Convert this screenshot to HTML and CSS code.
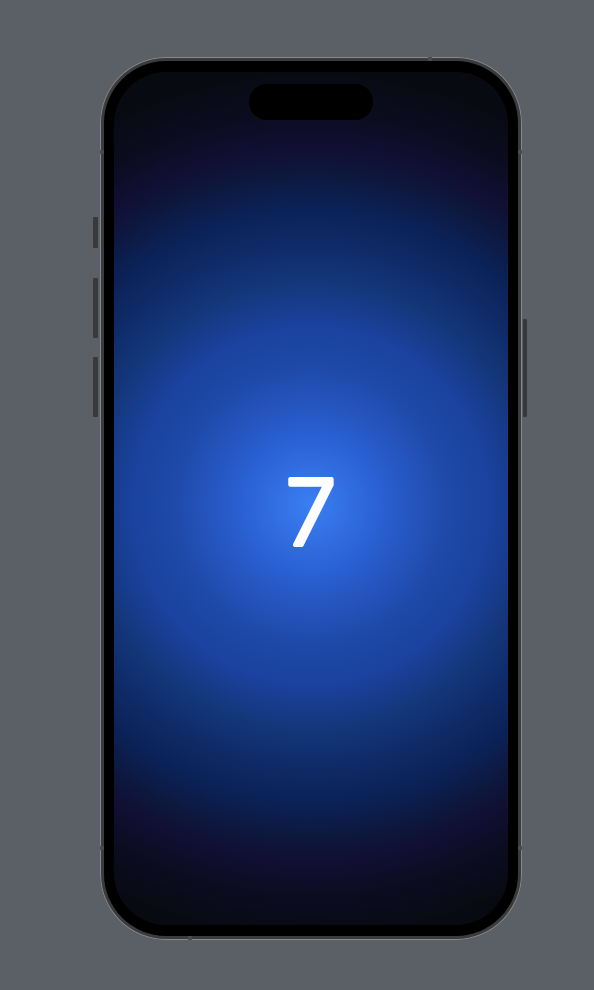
FILE: index.html
```html
<!DOCTYPE html>
<html lang="en">
<head>
<meta charset="utf-8">
<title>Phone</title>
<link rel="stylesheet" href="styles.css">
</head>
<body>
<div class="stage">
  <div class="phone">
    <span class="btn btn-action"></span>
    <span class="btn btn-volup"></span>
    <span class="btn btn-voldown"></span>
    <span class="btn btn-power"></span>
    <span class="band band-tl"></span>
    <span class="band band-tr"></span>
    <span class="band band-bl"></span>
    <span class="band band-br"></span>
    <span class="band band-top"></span>
    <span class="band band-bottom"></span>
    <div class="bezel">
      <div class="screen">
        <div class="island"></div>
        <svg class="digit" width="120" height="120" viewBox="0 0 120 120">
          <text x="60" y="92" text-anchor="middle">7</text>
        </svg>
      </div>
    </div>
  </div>
</div>
</body>
</html>
```
FILE: styles.css
```css
html, body {
  margin: 0;
  padding: 0;
  background: #5b5f66;
}
body {
  width: 594px;
  height: 990px;
  overflow: hidden;
  font-family: Inter, "Noto Sans", sans-serif;
}
.stage {
  padding: 57px 0 0 100px;
}
.phone {
  position: relative;
  width: 422px;
  height: 883px;
  box-sizing: border-box;
  border-radius: 66px;
  background: #3a3b3d;
  padding: 4px;
  box-shadow: inset 0 0 0 1px #85888d;
}
.bezel {
  width: 100%;
  height: 100%;
  box-sizing: border-box;
  border-radius: 62px;
  background: #000;
  padding: 11px 10px;
}
.screen {
  position: relative;
  width: 100%;
  height: 100%;
  border-radius: 52px;
  overflow: hidden;
  display: flex;
  align-items: center;
  justify-content: center;
  background: radial-gradient(circle 440px at 50% 50.8%,
    #3a7ff4 0px,
    #2a60d2 70px,
    #1f4aaa 135px,
    #1a429e 180px,
    #143679 225px,
    #0e2a66 265px,
    #0b2155 300px,
    #0d183f 330px,
    #110f34 355px,
    #0c0c20 392px,
    #080a12 435px);
}
.island {
  position: absolute;
  top: 12px;
  left: 50%;
  margin-left: -62px;
  width: 124px;
  height: 36px;
  border-radius: 18px;
  background: #000;
}
.digit {
  margin-top: 28px;
}
.digit text {
  font-family: Inter, "Noto Sans", sans-serif;
  font-weight: 300;
  font-size: 91px;
  fill: #fff;
  stroke: #fff;
  stroke-width: 4;
  stroke-linejoin: round;
}
.btn {
  position: absolute;
  width: 5px;
  background: #38393c;
  border-radius: 1px;
}
.btn-action { left: -7px; top: 160px; height: 31px; }
.btn-volup { left: -7px; top: 221px; height: 60px; }
.btn-voldown { left: -7px; top: 300px; height: 60px; }
.btn-power { right: -5px; top: 262px; height: 98px; width: 4px; }
.band {
  position: absolute;
  background: #4a4b4e;
}
.band-tl { left: 0; top: 93px; width: 4px; height: 4px; }
.band-tr { right: 0; top: 93px; width: 4px; height: 4px; }
.band-bl { left: 0; bottom: 90px; width: 4px; height: 4px; }
.band-br { right: 0; bottom: 90px; width: 4px; height: 4px; }
.band-top { right: 90px; top: 0; width: 4px; height: 4px; }
.band-bottom { left: 88px; bottom: 0; width: 4px; height: 4px; }
```
